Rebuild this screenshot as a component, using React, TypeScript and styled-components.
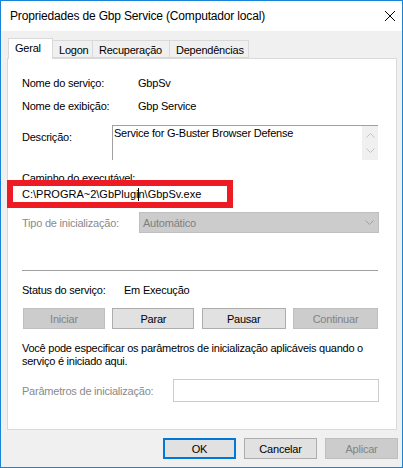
import React from 'react';
import styled, { createGlobalStyle } from 'styled-components';

const FONT = `"Liberation Sans", Arial, sans-serif`;

const GlobalStyle = createGlobalStyle`
  html, body {
    margin: 0;
    padding: 0;
    background: #ffffff;
  }
  body {
    font-family: ${FONT};
    font-size: 11px;
    letter-spacing: -0.22px;
    color: #000;
  }
`;

const Window = styled.div`
  position: relative;
  width: 403px;
  height: 468px;
  box-sizing: border-box;
  border: 1px solid #1883d7;
  background: #f0f0f0;
  display: flex;
  flex-direction: column;
`;

const TitleBar = styled.div`
  height: 30px;
  background: #ffffff;
  display: flex;
  align-items: center;
  justify-content: space-between;
  padding: 0 7px 0 9px;
`;

const Title = styled.span`
  font-size: 12px;
  line-height: 16px;
  letter-spacing: -0.17px;
`;

const Body = styled.div`
  padding: 7px 5px 0 6px;
  display: flex;
  flex-direction: column;
`;

const TabStrip = styled.div`
  display: flex;
  align-items: flex-end;
  height: 20px;
  padding-left: 1px;
`;

const Tab = styled.div<{ $active?: boolean; $width: number }>`
  box-sizing: border-box;
  width: ${(p) => p.$width}px;
  height: ${(p) => (p.$active ? 21 : 18)}px;
  margin-bottom: ${(p) => (p.$active ? -1 : 0)}px;
  position: relative;
  z-index: ${(p) => (p.$active ? 2 : 1)};
  background: ${(p) => (p.$active ? '#ffffff' : '#f0f0f0')};
  border: 1px solid #d9d9d9;
  border-left: ${(p) => (p.$active ? '1px solid #d9d9d9' : 'none')};
  border-bottom: ${(p) => (p.$active ? 'none' : '1px solid #d9d9d9')};
  display: flex;
  align-items: center;
  padding-left: 6px;
  padding-top: ${(p) => (p.$active ? 0 : 2)}px;
  padding-bottom: ${(p) => (p.$active ? 2 : 0)}px;
  line-height: 16px;
  white-space: nowrap;
`;

const Panel = styled.div`
  box-sizing: border-box;
  width: 390px;
  height: 372px;
  background: #ffffff;
  border: 1px solid #d9d9d9;
  padding: 0 17px 0 14px;
  display: flex;
  flex-direction: column;
`;

const Row = styled.div<{ $top: number; $height?: number; $align?: string }>`
  display: flex;
  align-items: ${(p) => p.$align ?? 'center'};
  margin-top: ${(p) => p.$top}px;
  height: ${(p) => p.$height ?? 16}px;
  line-height: 16px;
  white-space: nowrap;
`;

const Label = styled.span<{ $width?: number; $disabled?: boolean; $pad?: number }>`
  flex: none;
  width: ${(p) => (p.$width ? `${p.$width}px` : 'auto')};
  color: ${(p) => (p.$disabled ? '#8a8a8a' : '#000')};
  padding-top: ${(p) => p.$pad ?? 0}px;
  white-space: nowrap;
`;

const DescBox = styled.div`
  box-sizing: border-box;
  width: 266px;
  height: 35px;
  border-top: 1px solid #a0a0a0;
  border-left: 1px solid #a0a0a0;
  display: flex;
`;

const DescText = styled.div`
  flex: 1;
  padding: 0 0 0 1px;
  line-height: 15px;
`;

const ScrollBar = styled.div`
  width: 16px;
  height: 34px;
  background: #f0f0f0;
  display: flex;
  flex-direction: column;
  align-items: center;
  justify-content: space-between;
  padding: 7px 0 7px;
  box-sizing: border-box;
`;

const PathText = styled.div`
  height: 16px;
  line-height: 16px;
  white-space: nowrap;
  letter-spacing: 0;
`;

const Caret = styled.span`
  display: inline-block;
  width: 1px;
  height: 13px;
  margin: 0 -0.5px;
  background: #000;
  vertical-align: -3px;
`;

const Combo = styled.div`
  box-sizing: border-box;
  width: 247px;
  height: 21px;
  background: #cccccc;
  border: 1px solid #bfbfbf;
  color: #7f7f7f;
  display: flex;
  align-items: center;
  justify-content: space-between;
  padding: 0 4px 0 3px;
`;

const Separator = styled.div`
  margin-top: 37px;
  height: 1px;
  width: 356px;
  background: #a0a0a0;
`;

const ButtonRow = styled.div`
  margin-top: 10px;
  box-sizing: border-box;
  width: 356px;
  padding-left: 1px;
  display: flex;
  justify-content: space-between;
`;

const Button = styled.button<{ $default?: boolean; $width?: number }>`
  box-sizing: border-box;
  width: ${(p) => p.$width ?? 73}px;
  height: 21px;
  margin: 0;
  padding: 0;
  font-family: ${FONT};
  font-size: 11px;
  letter-spacing: -0.22px;
  color: #000;
  background: #e1e1e1;
  border: ${(p) => (p.$default ? '2px solid #0078d7' : '1px solid #adadad')};
  &:disabled {
    color: #838383;
    background: #cccccc;
    border-color: #bfbfbf;
  }
`;

const Paragraph = styled.p`
  margin: 13px 0 0;
  line-height: 13px;
  letter-spacing: -0.25px;
  white-space: nowrap;
`;

const ParamInput = styled.div`
  box-sizing: border-box;
  width: 207px;
  height: 23px;
  border: 1px solid #cccccc;
  background: #ffffff;
`;

const Footer = styled.div`
  display: flex;
  justify-content: flex-end;
  gap: 8px;
  margin-top: 8px;
  margin-right: -1px;
`;

const Highlight = styled.div`
  position: absolute;
  left: 6px;
  top: 179px;
  width: 226px;
  height: 28px;
  box-sizing: border-box;
  border: 6px solid #ed1c24;
  pointer-events: none;
`;

const Chevron = ({ up, color = '#a6a6a6' }: { up?: boolean; color?: string }) => (
  <svg width="9" height="5" viewBox="0 0 9 5" style={{ display: 'block' }}>
    <path
      d={up ? 'M0.5 4.5 L4.5 0.5 L8.5 4.5' : 'M0.5 0.5 L4.5 4.5 L8.5 0.5'}
      fill="none"
      stroke={color}
      strokeWidth="1"
    />
  </svg>
);

const CloseIcon = () => (
  <svg width="10" height="10" viewBox="0 0 10 10" style={{ display: 'block' }}>
    <path d="M0 0 L10 10 M10 0 L0 10" stroke="#000" strokeWidth="1" />
  </svg>
);

export default function App() {
  return (
    <>
      <GlobalStyle />
      <Window>
        <TitleBar>
          <Title>Propriedades de Gbp Service (Computador local)</Title>
          <CloseIcon />
        </TitleBar>
        <Body>
          <TabStrip>
            <Tab $active $width={45}>Geral</Tab>
            <Tab $width={40}>Logon</Tab>
            <Tab $width={77}>Recuperação</Tab>
            <Tab $width={79}>Dependências</Tab>
          </TabStrip>
          <Panel>
            <Row $top={16}>
              <Label $width={116}>Nome do serviço:</Label>
              <span>GbpSv</span>
            </Row>
            <Row $top={7}>
              <Label $width={116}>Nome de exibição:</Label>
              <span>Gbp Service</span>
            </Row>
            <Row $top={11} $height={35} $align="flex-start">
              <Label $width={90} $pad={4}>Descrição:</Label>
              <DescBox>
                <DescText>Service for G-Buster Browser Defense</DescText>
                <ScrollBar>
                  <Chevron up color="#c2c2c2" />
                  <Chevron color="#c2c2c2" />
                </ScrollBar>
              </DescBox>
            </Row>
            <Row $top={10}>
              <Label>Caminho do executável:</Label>
            </Row>
            <PathText>
              C:\PROGRA~2\GbPlugi
              <Caret />
              n\GbpSv.exe
            </PathText>
            <Row $top={10} $height={21}>
              <Label $width={117} $disabled>
                Tipo de inicialização:
              </Label>
              <Combo>
                <span>Automático</span>
                <Chevron color="#a0a0a0" />
              </Combo>
            </Row>
            <Separator />
            <Row $top={11}>
              <Label $width={102}>Status do serviço:</Label>
              <span>Em Execução</span>
            </Row>
            <ButtonRow>
              <Button disabled $width={82}>Iniciar</Button>
              <Button $width={82}>Parar</Button>
              <Button $width={84}>Pausar</Button>
              <Button disabled $width={85}>Continuar</Button>
            </ButtonRow>
            <Paragraph>
              Você pode especificar os parâmetros de inicialização aplicáveis quando o
              <br />
              serviço é iniciado aqui.
            </Paragraph>
            <Row $top={11} $height={23}>
              <Label $width={151} $disabled>
                Parâmetros de inicialização:
              </Label>
              <ParamInput />
            </Row>
          </Panel>
          <Footer>
            <Button $default>OK</Button>
            <Button>Cancelar</Button>
            <Button disabled>Aplicar</Button>
          </Footer>
        </Body>
        <Highlight />
      </Window>
    </>
  );
}
